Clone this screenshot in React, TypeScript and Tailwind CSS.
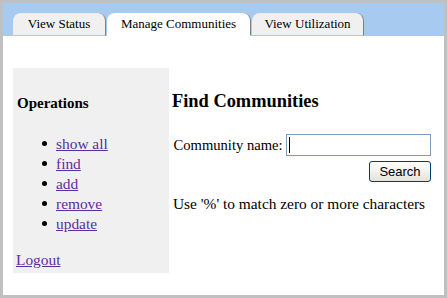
const serif = "font-['Liberation_Serif','Times_New_Roman',serif]"

const tabs = [
  { label: "View Status", width: "w-[93px]", active: false },
  { label: "Manage Communities", width: "w-[144px]", active: true },
  { label: "View Utilization", width: "w-[112px]", active: false },
]

const operations = ["show all", "find", "add", "remove", "update"]

function Tab({ label, width, active }: { label: string; width: string; active: boolean }) {
  return (
    <div
      className={
        width +
        " h-[23px] rounded-t-[8px] border-r border-r-[#808080] border-b text-center text-[13px] leading-[22px] text-black " +
        (active ? "bg-white border-b-white" : "bg-[#f0f0f0] border-b-[#a6caf0]")
      }
    >
      {label}
    </div>
  )
}

export default function App() {
  return (
    <div className={"w-[447px] h-[298px] border-[3px] border-[#c0c0c0] bg-white overflow-hidden " + serif}>
      <div className="h-[33px] bg-[#a6caf0] flex items-end gap-[1px] pl-[10px]">
        {tabs.map((t) => (
          <Tab key={t.label} {...t} />
        ))}
      </div>

      <div className="flex pl-[10px] pt-[32px]">
        <div className="w-[156px] h-[205px] shrink-0 bg-[#f0f0f0] text-[15.4px] text-black">
          <div className="mt-[26px] pl-[4px] font-bold leading-[18px] text-[15px]">Operations</div>
          <ul className="mt-[22px] pl-[29px]">
            {operations.map((op) => (
              <li key={op} className="flex items-start gap-[9px] leading-[20px]">
                <span className="mt-[7px] w-[5px] h-[5px] rounded-full bg-black shrink-0" />
                <a href="#" className="text-[#5a2d9c] underline">
                  {op}
                </a>
              </li>
            ))}
          </ul>
          <div className="mt-[16px] pl-[3px] leading-[20px]">
            <a href="#" className="text-[#5a2d9c] underline">
              Logout
            </a>
          </div>
        </div>

        <div className="ml-[3px] w-[259px] shrink-0 text-[15.4px] text-black">
          <div className="mt-[21.5px] text-[18.4px] font-bold leading-[22px]">Find Communities</div>
          <div className="mt-[22.5px] flex items-center pl-[1.5px]">
            <span className="text-[14.6px] leading-[17px] whitespace-nowrap">Community name:</span>
            <div className="ml-auto w-[145px] h-[22px] shrink-0 border border-[#7f9db9] bg-white flex items-center pl-[2px]">
              <span className="w-[1px] h-[16px] bg-black" />
            </div>
          </div>
          <div className="mt-[5px] flex justify-end">
            <button className="w-[62px] h-[21px] rounded-[3px] border border-[#003c74] bg-gradient-to-b from-white to-[#e3e3db] font-['Liberation_Sans',Arial,sans-serif] text-[13px] leading-[19px] text-black">
              Search
            </button>
          </div>
          <div className="mt-[13px] pl-[1px] leading-[17px] whitespace-nowrap">Use '%' to match zero or more characters</div>
        </div>
      </div>
    </div>
  )
}
